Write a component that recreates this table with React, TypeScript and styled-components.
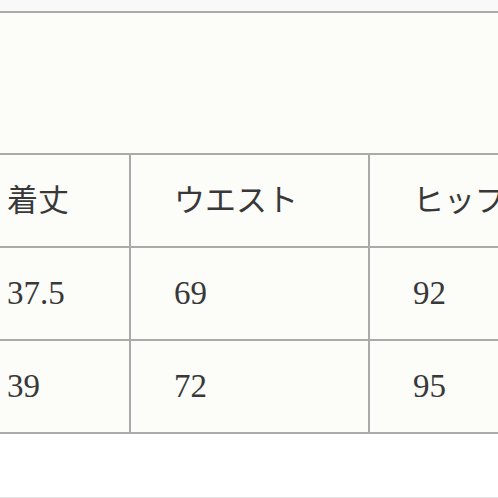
import React from 'react';
import styled, { createGlobalStyle } from 'styled-components';

const GlobalStyle = createGlobalStyle`
  html, body {
    margin: 0;
    padding: 0;
    background: #ffffff;
  }
  body {
    width: 498px;
    height: 498px;
    overflow: hidden;
    font-family: "Liberation Serif", "Noto Sans CJK JP", serif;
    color: #383838;
  }
`;

const TopStrip = styled.div`
  height: 11px;
  background: #f9f9f9;
`;

const Panel = styled.section`
  border-top: 2px solid #aaaaaa;
  background: #fcfcf9;
  padding-top: 140px;
  overflow: hidden;
`;

const Table = styled.table`
  border-collapse: separate;
  border-spacing: 0;
  border-top: 2px solid #aaaaaa;
  width: 700px;
  table-layout: fixed;
`;

const Cell = styled.td<{ $first?: boolean; $num?: boolean }>`
  height: 91px;
  padding: 0 0 0 ${p => (p.$first ? '7px' : '43px')};
  border-right: 2px solid #aaaaaa;
  border-bottom: 2px solid #aaaaaa;
  font-size: ${p => (p.$num ? '33px' : '31px')};
  font-weight: normal;
  line-height: 1;
  text-align: left;
  vertical-align: middle;
  white-space: nowrap;
  box-sizing: content-box;
`;

const Footer = styled.div`
  margin-top: 63px;
  border-top: 1px solid #e2e2e2;
  height: 10px;
`;

const headers = ['着丈', 'ウエスト', 'ヒップ'];
const rows = [
  ['37.5', '69', '92'],
  ['39', '72', '95'],
];

export default function App() {
  return (
    <>
      <GlobalStyle />
      <TopStrip />
      <Panel>
        <Table>
          <colgroup>
            <col style={{ width: 131 }} />
            <col style={{ width: 239 }} />
            <col />
          </colgroup>
          <thead>
            <tr>
              {headers.map((h, i) => (
                <Cell as="th" key={h} $first={i === 0}>
                  {h}
                </Cell>
              ))}
            </tr>
          </thead>
          <tbody>
            {rows.map((r, ri) => (
              <tr key={ri}>
                {r.map((v, i) => (
                  <Cell key={i} $first={i === 0} $num>
                    {v}
                  </Cell>
                ))}
              </tr>
            ))}
          </tbody>
        </Table>
      </Panel>
      <Footer />
    </>
  );
}
